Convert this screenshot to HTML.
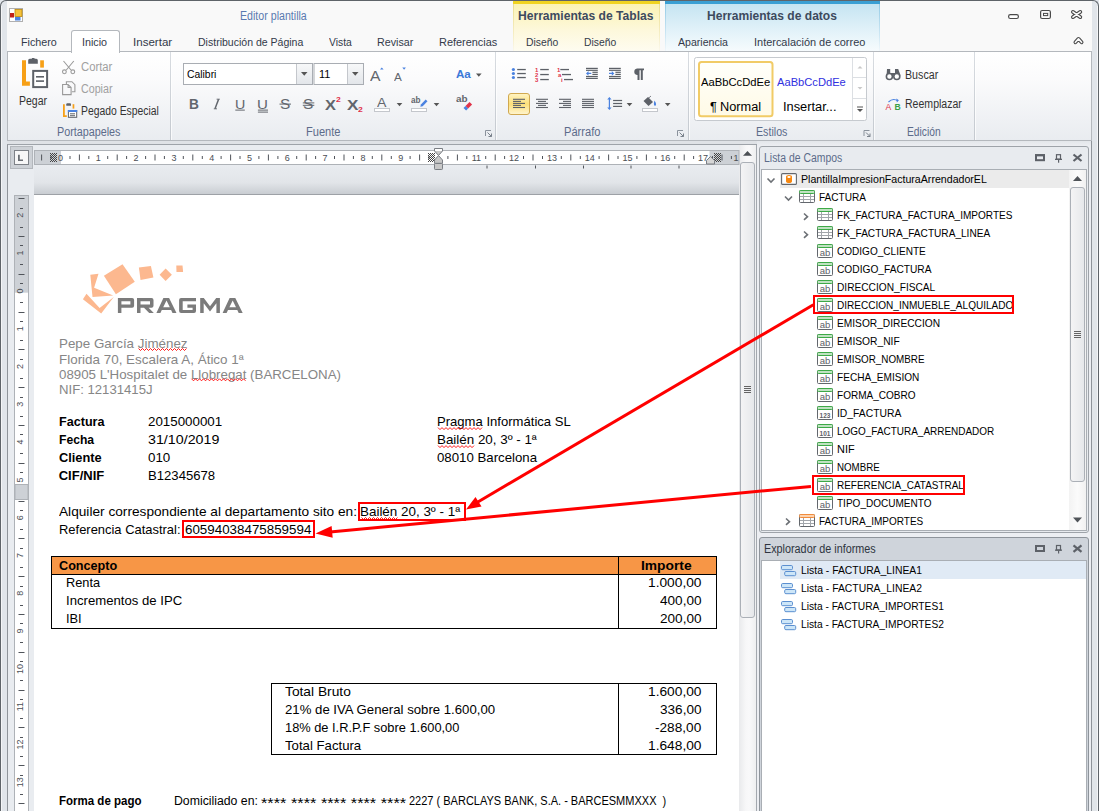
<!DOCTYPE html>
<html><head><meta charset="utf-8"><style>
html,body{margin:0;padding:0;}
body{width:1099px;height:811px;overflow:hidden;position:relative;background:#e3e7ec;font-family:"Liberation Sans",sans-serif;}
.a{position:absolute;box-sizing:border-box;}
.t{position:absolute;white-space:pre;line-height:normal;transform-origin:0 0;font-family:"Liberation Sans",sans-serif;}

</style></head><body>
<!-- frame -->
<div class=a style="left:0;top:0;width:1099px;height:811px;border:1px solid #5f6469;border-bottom:none;border-radius:6px 6px 0 0;background:#e1e5ea"></div>
<!-- title+tabs area -->
<div class=a style="left:7px;top:1px;width:1085px;height:50px;background:#f9f9f9"></div>
<!-- contextual yellow -->
<div class=a style="left:513px;top:1px;width:147px;height:50px;background:linear-gradient(#fbf2b0,#fdf8dc 60%,#fefcf0)"></div>
<div class=a style="left:513px;top:1px;width:1px;height:50px;background:linear-gradient(#eadc8a,#f6efc8 70%,#fbf8ec)"></div>
<div class=a style="left:659px;top:1px;width:1px;height:50px;background:linear-gradient(#eadc8a,#f6efc8 70%,#fbf8ec)"></div>
<div class=a style="left:513px;top:1px;width:147px;height:3px;background:#f0d320"></div>
<!-- contextual blue -->
<div class=a style="left:665px;top:1px;width:215px;height:50px;background:linear-gradient(#c2e3f1,#e2f2f9 60%,#f6fbfd)"></div>
<div class=a style="left:665px;top:1px;width:1px;height:50px;background:linear-gradient(#8fc8e4,#cfe8f4 70%,#f0f7fb)"></div>
<div class=a style="left:879px;top:1px;width:1px;height:50px;background:linear-gradient(#8fc8e4,#cfe8f4 70%,#f0f7fb)"></div>
<div class=a style="left:665px;top:1px;width:215px;height:3px;background:#3a9fd3"></div>
<!-- ribbon body -->
<div class=a style="left:7px;top:51px;width:1085px;height:90px;border:1px solid #b4b8bd;background:linear-gradient(#ffffff,#fbfbfc 30%,#e9ecf0)"></div>
<!-- active tab -->
<div class=a style="left:71px;top:30px;width:49px;height:23px;border:1px solid #b4b8bd;border-bottom:none;border-radius:3px 3px 0 0;background:#fff"></div>
<!-- group separators -->
<div class=a style="left:170px;top:52px;width:1px;height:88px;background:linear-gradient(#d8dce1,#c4c9cf)"></div><div class=a style="left:171px;top:52px;width:1px;height:88px;background:rgba(255,255,255,0.7)"></div>
<div class=a style="left:495px;top:52px;width:1px;height:88px;background:linear-gradient(#d8dce1,#c4c9cf)"></div><div class=a style="left:496px;top:52px;width:1px;height:88px;background:rgba(255,255,255,0.7)"></div>
<div class=a style="left:688px;top:52px;width:1px;height:88px;background:linear-gradient(#d8dce1,#c4c9cf)"></div><div class=a style="left:689px;top:52px;width:1px;height:88px;background:rgba(255,255,255,0.7)"></div>
<div class=a style="left:873px;top:52px;width:1px;height:88px;background:linear-gradient(#d8dce1,#c4c9cf)"></div><div class=a style="left:874px;top:52px;width:1px;height:88px;background:rgba(255,255,255,0.7)"></div>
<div class=a style="left:974px;top:52px;width:1px;height:88px;background:linear-gradient(#d8dce1,#c4c9cf)"></div><div class=a style="left:975px;top:52px;width:1px;height:88px;background:rgba(255,255,255,0.7)"></div>
<!-- below ribbon -->
<div class=a style="left:7px;top:141px;width:1085px;height:3px;background:#dfe2e6"></div>
<div class=a style="left:7px;top:144px;width:750px;height:667px;border-top:1px solid #9ea3a9;border-left:1px solid #8f949a;background:#e9ecf0"></div>
<div class=a style="left:1px;top:6px;width:1px;height:805px;background:#f4f5f7"></div>
<!-- band below ruler -->
<div class=a style="left:34px;top:165px;width:705px;height:30px;background:linear-gradient(#e9ecf0,#e2e5e9 60%,#c9cdd2);border-bottom:1px solid #9da1a6"></div>
<!-- page -->
<div class=a style="left:34px;top:195px;width:705px;height:616px;background:#fff"></div>
<!-- doc scrollbar -->
<div class=a style="left:739px;top:145px;width:18px;height:666px;background:linear-gradient(90deg,#e9eaec,#f7f7f8 40%,#f9f9fa 60%,#eeeff0);border-right:1px solid #a3a8ae"></div>
<div class=a style="left:740px;top:162px;width:15px;height:456px;background:linear-gradient(90deg,#f4f4f5,#e6e8eb);border:1px solid #abb0b7;border-radius:3px"></div>
<!-- right panels bg -->
<div class=a style="left:757px;top:141px;width:335px;height:670px;background:linear-gradient(#e3e6ea,#eceef2 5px)"></div>
<div class=a style="left:1091px;top:141px;width:1px;height:670px;background:#8e9399"></div>
<div class=a style="left:1092px;top:141px;width:5px;height:670px;background:#e1e5e9"></div>
<div class=a style="left:1097px;top:6px;width:1px;height:805px;background:#f4f5f7"></div>
<!-- panel 1 -->
<div class=a style="left:759px;top:146px;width:330px;height:387px;border:1px solid #9ea3a9;border-radius:3px;background:#e8ebef"></div>
<div class=a style="left:761px;top:169px;width:326px;height:362px;border:1px solid #a9aeb4;background:#fff"></div>
<div class=a style="left:780px;top:170px;width:290px;height:18px;background:#ebebeb"></div>
<!-- tree scrollbar -->
<div class=a style="left:1069px;top:170px;width:17px;height:360px;background:linear-gradient(90deg,#f3f3f3,#fbfbfb 50%,#f1f1f1)"></div>
<div class=a style="left:1070px;top:187px;width:15px;height:295px;background:linear-gradient(90deg,#f4f4f5,#e6e8eb);border:1px solid #abb0b7;border-radius:3px"></div>
<!-- panel 2 -->
<div class=a style="left:759px;top:537px;width:330px;height:290px;border:1px solid #8e949b;border-radius:3px;background:#cfd4db"></div>
<div class=a style="left:761px;top:560px;width:326px;height:260px;border:1px solid #a9aeb4;background:#fff"></div>
<div class=a style="left:780px;top:561px;width:306px;height:18px;background:#e0eaf5"></div>
<!-- logo -->
<svg class=a style="left:0;top:0" width="260" height="330" viewBox="0 0 260 330">
<g fill="#fcb88f">
<polygon points="103.9,275.7 122.5,264.3 134.8,281.7 115.9,294.3"/>
<polygon points="138.9,267.6 150.9,265.9 153.4,277.4 140.5,279.9"/>
<polygon points="159.6,274.7 165.6,268.6 171.9,274.7 165.6,281"/>
<polygon points="176.3,265.4 182.5,265.4 183.1,271.9 176.5,271.9"/>
<polygon points="90.3,274.7 98.5,273.8 94.1,287.8 113.2,295.4 92.5,297"/>
<polygon points="82.9,299.2 86.5,293.8 99.6,307.9 113.8,297 101.2,313.4"/>
</g>
</svg>
<svg class=a style="left:0;top:0" width="260" height="330" viewBox="0 0 260 330">
<g fill="#7b7b7b" fill-rule="evenodd">
<path d="M117.9,313.1 V298.1 H132.1 Q134.1,298.1 134.1,300.1 V305.7 Q134.1,307.7 132.1,307.7 H121.4 V313.1 Z M121.4,301.3 H130.4 V304.5 H121.4 Z"/>
<path d="M137,313.1 V298.1 H151.5 Q153.5,298.1 153.5,300.1 V305.7 Q153.5,307.7 151.5,307.7 H148.6 L153.8,313.1 H149.2 L144,307.7 H140.5 V313.1 Z M140.5,301.3 H150 V304.5 H140.5 Z"/>
<path d="M156.4,313.1 L163.4,298.1 H169.1 L176.5,313.1 H172.5 L171.1,310 H161.8 L160.4,313.1 Z M163.2,307.2 H169.8 L166.5,300.6 Z"/>
<path d="M196,298.1 H181.1 Q179.1,298.1 179.1,300.1 V311.1 Q179.1,313.1 181.1,313.1 H194 Q196,313.1 196,311.1 V304.5 H187.4 V307.7 H192.6 V310 H182.7 V301.3 H196 Z"/>
<path d="M200.2,313.1 V298.1 H203.8 L210,306.3 L216.2,298.1 H219.9 V313.1 H216.4 V303.2 L210,311.6 L203.7,303.2 V313.1 Z"/>
<path d="M222.60000000000002,313.1 L229.60000000000002,298.1 H235.3 L242.7,313.1 H238.7 L237.3,310 H228.0 L226.60000000000002,313.1 Z M229.39999999999998,307.2 H236.0 L232.7,300.6 Z"/>
</g></svg>
<!-- table 1 -->
<div class=a style="left:51px;top:556px;width:666px;height:73px;border:1px solid #000"></div>
<div class=a style="left:52px;top:557px;width:664px;height:18px;background:#f79646;border-bottom:1px solid #000"></div>
<div class=a style="left:618px;top:556px;width:1px;height:73px;background:#000"></div>
<!-- table 2 -->
<div class=a style="left:271px;top:683px;width:446px;height:72px;border:1px solid #000"></div>
<div class=a style="left:618px;top:683px;width:1px;height:72px;background:#000"></div>

<svg class=a style='left:0;top:0' width='1099' height='811'><defs>
<linearGradient id='gcombo' x1='0' y1='0' x2='0' y2='1'><stop offset='0' stop-color='#f7f8f9'/><stop offset='1' stop-color='#e3e6ea'/></linearGradient>
<linearGradient id='gsel' x1='0' y1='0' x2='0' y2='1'><stop offset='0' stop-color='#fff4c4'/><stop offset='0.5' stop-color='#fde07a'/><stop offset='1' stop-color='#fff5d0'/></linearGradient>
<linearGradient id='gsty' x1='0' y1='0' x2='0' y2='1'><stop offset='0' stop-color='#fffffb'/><stop offset='1' stop-color='#fffae6'/></linearGradient>
</defs>
<rect x="9.5" y="8.5" width="13" height="13" fill="#fff" stroke="#b0b0b0"/>
<rect x="15" y="9.5" width="7" height="7" fill="#f5c23a" stroke="#b8860b" stroke-width="0.8"/>
<rect x="10" y="13" width="4" height="4.5" fill="#c0201a"/>
<rect x="15" y="17" width="5.5" height="3.5" fill="#4a82e0"/>
<rect x="1008.6" y="14.6" width="9.8" height="3.9" rx="1.8" fill="#fff" stroke="#4a4a4a" stroke-width="1.2"/>
<rect x="1040.6" y="10.5" width="9.8" height="8" rx="1.5" fill="none" stroke="#4a4a4a" stroke-width="1.2"/>
<rect x="1043.5" y="13.4" width="4.2" height="2.2" fill="none" stroke="#4a4a4a" stroke-width="1"/>
<path d="M1072.9,11.9 L1080.3,17.1 M1080.3,11.9 L1072.9,17.1" stroke="#4a4a4a" stroke-width="3.8" stroke-linecap="round"/>
<path d="M1072.9,11.9 L1080.3,17.1 M1080.3,11.9 L1072.9,17.1" stroke="#fbfbfb" stroke-width="1.6" stroke-linecap="round"/>
<path d="M1075.4,42.3 L1078.5,38.9 L1081.6,42.3" fill="none" stroke="#4a4a4a" stroke-width="3.8" stroke-linecap="round" stroke-linejoin="round"/>
<path d="M1075.4,42.3 L1078.5,38.9 L1081.6,42.3" fill="none" stroke="#fbfbfb" stroke-width="1.6" stroke-linecap="round" stroke-linejoin="round"/>
<path d="M22,60.3 h4 v21.3 h3.9 v4.2 h-7.9 Z" fill="#f7a017"/>
<rect x="40.2" y="60.3" width="3.7" height="7.3" fill="#f7a017"/>
<path d="M28.2,63.8 v-3.5 q0,-1.5 1.5,-1.5 h2.2 v-0.8 h2.6 v0.8 h1.8 q1.5,0 1.5,1.5 v3.5 Z" fill="#5d6168"/>
<rect x="33.2" y="70.9" width="13.9" height="16.2" fill="#fff" stroke="#5d6168" stroke-width="2"/>
<rect x="36" y="76" width="8" height="1.6" fill="#5d6168"/><rect x="36" y="80.3" width="8" height="1.6" fill="#5d6168"/>
<path d="M63.5,61 L71,70 M73.8,61 L66.3,70" stroke="#9a9a9a" stroke-width="1.1" fill="none"/>
<circle cx="64.4" cy="71.8" r="1.9" fill="none" stroke="#9a9a9a" stroke-width="1.1"/><circle cx="72.8" cy="71.8" r="1.9" fill="none" stroke="#9a9a9a" stroke-width="1.1"/>
<path d="M66.4,84 v-2.3 h5.5 l3,3 v7.1 h-3" fill="none" stroke="#9a9a9a" stroke-width="1.1"/>
<path d="M62.6,84.5 h5.5 l3,3 v7.1 h-8.5 Z M68.1,84.5 v3 h3" fill="none" stroke="#9a9a9a" stroke-width="1.1"/>
<path d="M63,104.2 h1.8 v11 h2 v1.7 h-3.8 Z" fill="#f7a017"/><rect x="72.6" y="104.2" width="1.7" height="4.4" fill="#f7a017"/>
<path d="M66.3,105.8 v-1.6 q0,-1 1,-1 h2.7 q1,0 1,1 v1.6 Z" fill="#5d6168"/>
<rect x="68.4" y="110.5" width="8.3" height="6.8" fill="#fff" stroke="#5d6168" stroke-width="1"/>
<rect x="67.9" y="110" width="9.3" height="2" fill="#4a82e0"/>
<rect x="70" y="113.3" width="5" height="1" fill="#5d6168"/><rect x="70" y="115.2" width="5" height="1" fill="#5d6168"/>
<rect x="183.5" y="63.5" width="129" height="21" fill="#fff" stroke="#a9adb3"/>
<rect x="296.5" y="64" width="15.5" height="20" fill="url(#gcombo)" stroke="none"/>
<line x1="296.5" y1="64" x2="296.5" y2="84" stroke="#c4c7cc"/>
<path d="M301,72 h6.5 l-3.25,3.8 Z" fill="#555"/>
<rect x="314" y="63.5" width="49.5" height="21" fill="#fff" stroke="#a9adb3"/>
<rect x="347.5" y="64" width="15.5" height="20" fill="url(#gcombo)"/>
<line x1="347.5" y1="64" x2="347.5" y2="84" stroke="#c4c7cc"/>
<path d="M352,72 h6.5 l-3.25,3.8 Z" fill="#555"/>
<path d="M485.5,136 v-5.5 h5.5" fill="none" stroke="#8a929c" stroke-width="1"/><path d="M487.5,132.5 l4,4 M488.5,136.5 h3 v-3" fill="none" stroke="#7a828c" stroke-width="1"/>
<path d="M677.5,136 v-5.5 h5.5" fill="none" stroke="#8a929c" stroke-width="1"/><path d="M679.5,132.5 l4,4 M680.5,136.5 h3 v-3" fill="none" stroke="#7a828c" stroke-width="1"/>
<path d="M864.0,136 v-5.5 h5.5" fill="none" stroke="#8a929c" stroke-width="1"/><path d="M866.0,132.5 l4,4 M867.0,136.5 h3 v-3" fill="none" stroke="#7a828c" stroke-width="1"/>
<path d="M476.0,73.5 h5.6 l-2.8,3.2 Z" fill="#555"/>
<path d="M396.7,103 h5.6 l-2.8,3.2 Z" fill="#555"/>
<path d="M433.7,103 h5.6 l-2.8,3.2 Z" fill="#555"/>
<path d="M626.7,103 h5.6 l-2.8,3.2 Z" fill="#555"/>
<path d="M664.9000000000001,103 h5.6 l-2.8,3.2 Z" fill="#555"/>
<rect x="374.5" y="108.5" width="15" height="3" fill="#fff" stroke="#c4c7cc" stroke-width="1"/>
<rect x="411.5" y="108.5" width="15" height="3" fill="#fff" stroke="#c4c7cc" stroke-width="1"/>
<rect x="642.5" y="108.5" width="15" height="3" fill="#fff" stroke="#c4c7cc" stroke-width="1"/>
<path d="M420.3,106.8 l0.6,-2.4 l4.8,-5 l1.8,1.8 l-4.8,5 Z" fill="#4a82e0"/>
<path d="M465.5,106 l4,-4 l2.6,2.6 l-4,4 Z" fill="#e0334a"/><path d="M463.5,108 l2,-2 l2.6,2.6 l-2,2 Z" fill="#4a82e0"/>
<path d="M380,69.6 l1.8,-2.2 l1.8,2.2 Z" fill="#4a82e0"/>
<path d="M402.3,67.6 h3.6 l-1.8,2.2 Z" fill="#4a82e0"/>
<circle cx="513.4" cy="69.5" r="1.6" fill="#4a82e0"/><rect x="517.2" y="68.9" width="8.6" height="1.3" fill="#5d6168"/>
<circle cx="513.4" cy="73.5" r="1.6" fill="#4a82e0"/><rect x="517.2" y="72.9" width="8.6" height="1.3" fill="#5d6168"/>
<circle cx="513.4" cy="77.5" r="1.6" fill="#4a82e0"/><rect x="517.2" y="76.9" width="8.6" height="1.3" fill="#5d6168"/>
<rect x="540.2" y="68.9" width="8.6" height="1.3" fill="#5d6168"/>
<text x="535" y="72.0" font-family="Liberation Sans" font-size="6" font-weight="700" fill="#e0334a">1</text>
<rect x="540.2" y="73.9" width="8.6" height="1.3" fill="#5d6168"/>
<text x="535" y="77.0" font-family="Liberation Sans" font-size="6" font-weight="700" fill="#e0334a">2</text>
<rect x="540.2" y="78.9" width="8.6" height="1.3" fill="#5d6168"/>
<text x="535" y="82.0" font-family="Liberation Sans" font-size="6" font-weight="700" fill="#e0334a">3</text>
<text x="557" y="72" font-family="Liberation Sans" font-size="6" font-weight="700" fill="#e0334a">1</text><rect x="560.3" y="68.9" width="8.7" height="1.3" fill="#5d6168"/>
<text x="558" y="77" font-family="Liberation Sans" font-size="6" font-weight="700" fill="#e0334a">a</text><rect x="562" y="73.9" width="9" height="1.3" fill="#5d6168"/>
<text x="561" y="82" font-family="Liberation Sans" font-size="6" font-weight="700" fill="#e0334a">i</text><rect x="564" y="78.9" width="9" height="1.3" fill="#5d6168"/>
<rect x="586" y="67.80000000000001" width="11.8" height="1.2" fill="#5d6168"/>
<rect x="586" y="69.7" width="11.8" height="1.2" fill="#5d6168"/>
<rect x="586" y="75.9" width="11.8" height="1.2" fill="#5d6168"/>
<rect x="586" y="77.80000000000001" width="11.8" height="1.2" fill="#5d6168"/>
<rect x="592.4" y="71.7" width="5.4" height="1.2" fill="#5d6168"/>
<rect x="592.4" y="73.80000000000001" width="5.4" height="1.2" fill="#5d6168"/>
<path d="M586,73.4 l2.5,-2.3 v1.6 h2.8 v1.4 h-2.8 v1.6 Z" fill="#4a82e0"/>
<rect x="609" y="67.80000000000001" width="11.8" height="1.2" fill="#5d6168"/>
<rect x="609" y="69.7" width="11.8" height="1.2" fill="#5d6168"/>
<rect x="609" y="75.9" width="11.8" height="1.2" fill="#5d6168"/>
<rect x="609" y="77.80000000000001" width="11.8" height="1.2" fill="#5d6168"/>
<rect x="615.4" y="71.7" width="5.4" height="1.2" fill="#5d6168"/>
<rect x="615.4" y="73.80000000000001" width="5.4" height="1.2" fill="#5d6168"/>
<path d="M614.3,73.4 l-2.5,-2.3 v1.6 h-2.8 v1.4 h2.8 v1.6 Z" fill="#4a82e0"/>
<path d="M637,68.5 h7 v1.8 h-1.2 v9.7 h-2 v-9.7 h-1.3 v9.7 h-2 v-5 h-0.5 a3.3,3.3 0 0 1 0,-6.5 Z" fill="#5d6168"/>
<rect x="508.5" y="93.5" width="21" height="21" rx="2.5" fill="url(#gsel)" stroke="#d0a850"/>
<rect x="513" y="98.75" width="12" height="1.1" fill="#5d6168"/>
<rect x="513" y="100.85000000000001" width="8" height="1.1" fill="#5d6168"/>
<rect x="513" y="102.85000000000001" width="12" height="1.1" fill="#5d6168"/>
<rect x="513" y="104.85000000000001" width="8" height="1.1" fill="#5d6168"/>
<rect x="513" y="106.95" width="12" height="1.1" fill="#5d6168"/>
<rect x="536.0" y="98.75" width="12" height="1.1" fill="#5d6168"/>
<rect x="538.0" y="100.85000000000001" width="8" height="1.1" fill="#5d6168"/>
<rect x="536.0" y="102.85000000000001" width="12" height="1.1" fill="#5d6168"/>
<rect x="538.0" y="104.85000000000001" width="8" height="1.1" fill="#5d6168"/>
<rect x="536.0" y="106.95" width="12" height="1.1" fill="#5d6168"/>
<rect x="559" y="98.75" width="12" height="1.1" fill="#5d6168"/>
<rect x="563" y="100.85000000000001" width="8" height="1.1" fill="#5d6168"/>
<rect x="559" y="102.85000000000001" width="12" height="1.1" fill="#5d6168"/>
<rect x="563" y="104.85000000000001" width="8" height="1.1" fill="#5d6168"/>
<rect x="559" y="106.95" width="12" height="1.1" fill="#5d6168"/>
<rect x="582" y="98.75" width="12" height="1.1" fill="#5d6168"/>
<rect x="582" y="100.85000000000001" width="12" height="1.1" fill="#5d6168"/>
<rect x="582" y="102.85000000000001" width="12" height="1.1" fill="#5d6168"/>
<rect x="582" y="104.85000000000001" width="12" height="1.1" fill="#5d6168"/>
<rect x="582" y="106.95" width="12" height="1.1" fill="#5d6168"/>
<path d="M609.4,97 l-2.2,2.4 h1.6 v8.2 h-1.6 l2.2,2.4 l2.2,-2.4 h-1.6 v-8.2 h1.6 Z" fill="#4a82e0"/>
<rect x="613.1" y="99.9" width="9" height="1.2" fill="#5d6168"/>
<rect x="613.1" y="102.9" width="9" height="1.2" fill="#5d6168"/>
<rect x="613.1" y="105.80000000000001" width="9" height="1.2" fill="#5d6168"/>
<path d="M643.5,101 l4.5,-4 l5,5 l-4.5,4 Z" fill="#5d6168"/><path d="M647,99.5 l4,-3.5" stroke="#5d6168" stroke-width="0.8"/>
<path d="M654.5,100.5 q2,2.5 1.5,5 h-2 q-0.5,-2.5 0.5,-5 Z" fill="#4a82e0"/>
<rect x="694.5" y="57.5" width="172" height="63" rx="2" fill="#fff" stroke="#c6cacf"/>
<rect x="699" y="62" width="73.5" height="54.3" rx="2.5" fill="url(#gsty)" stroke="#f1cb66" stroke-width="2"/>
<line x1="852.5" y1="58" x2="852.5" y2="120" stroke="#dcdfe3"/><line x1="853" y1="77.5" x2="866" y2="77.5" stroke="#dcdfe3"/><line x1="853" y1="98.5" x2="866" y2="98.5" stroke="#dcdfe3"/>
<path d="M857.5,68.5 h5 l-2.5,-2.5 Z" fill="#c8c8c8"/><path d="M857.5,87 h5 l-2.5,2.5 Z" fill="#c8c8c8"/>
<rect x="857" y="106.5" width="6" height="1" fill="#555"/><path d="M857,109 h6 l-3,3 Z" fill="#555"/>
<path d="M887,69 h3.2 v4 h4.8 v-4 h3.2 l2.4,6.5 h-14 Z" fill="#5d6168"/>
<circle cx="889.4" cy="76.5" r="3" fill="#fff" stroke="#5d6168" stroke-width="1.6"/><circle cx="896.8" cy="76.5" r="3" fill="#fff" stroke="#5d6168" stroke-width="1.6"/>
<text x="885.6" y="109.8" font-family="Liberation Sans" font-size="8.6" fill="#e0334a">A</text><text x="894.6" y="109.8" font-family="Liberation Sans" font-size="8.6" font-weight="700" fill="#3aa047">B</text>
<path d="M888.5,102 q4.5,-4.5 9.5,-1" fill="none" stroke="#4a82e0" stroke-width="1.1"/><path d="M896.3,98.5 l2.6,1.8 l-2.1,2.3 Z" fill="#4a82e0"/>

<rect x="235.3" y="109.6" width="9.5" height="1" fill="#62666d"/>
<rect x="257.9" y="109.6" width="10.1" height="1" fill="#62666d"/><rect x="257.9" y="111.6" width="10.1" height="1" fill="#62666d"/>
<rect x="279.5" y="103.6" width="11.5" height="1" fill="#62666d"/>
<rect x="302.8" y="102.4" width="11.5" height="1" fill="#62666d"/><rect x="302.8" y="104.8" width="11.5" height="1" fill="#62666d"/>
<path d="M218.6,99.2 L215,108.8" stroke="#62666d" stroke-width="1.5"/><path d="M216.6,99.2 h3.2 M213.8,108.8 h3.2" stroke="#62666d" stroke-width="0.9"/>
<rect x="10.5" y="146.5" width="22" height="22" fill="#cdd1d6" stroke="#b3b7bc"/>
<rect x="14.5" y="150.5" width="14" height="14" fill="#f7f7f7" stroke="#7d8187"/>
<path d="M18,154.8 h1.8 v4.6 h3.2 v1.6 h-5 Z" fill="#6a6e74"/>
<rect x="34.5" y="150.5" width="704.5" height="14" fill="#cdd1d6" stroke="#aeb2b7" stroke-width="1"/>
<rect x="61" y="151" width="648.5" height="13" fill="#fff"/>
<rect x="41.1" y="154.5" width="1" height="6" fill="#50545a"/>
<rect x="50.5" y="156" width="1" height="3" fill="#50545a"/>
<rect x="69.5" y="156" width="1" height="3" fill="#50545a"/>
<rect x="78.9" y="154.5" width="1" height="6" fill="#50545a"/>
<rect x="88.3" y="156" width="1" height="3" fill="#50545a"/>
<rect x="107.2" y="156" width="1" height="3" fill="#50545a"/>
<rect x="116.7" y="154.5" width="1" height="6" fill="#50545a"/>
<rect x="126.1" y="156" width="1" height="3" fill="#50545a"/>
<rect x="145.1" y="156" width="1" height="3" fill="#50545a"/>
<rect x="154.5" y="154.5" width="1" height="6" fill="#50545a"/>
<rect x="163.9" y="156" width="1" height="3" fill="#50545a"/>
<rect x="182.8" y="156" width="1" height="3" fill="#50545a"/>
<rect x="192.3" y="154.5" width="1" height="6" fill="#50545a"/>
<rect x="201.8" y="156" width="1" height="3" fill="#50545a"/>
<rect x="220.6" y="156" width="1" height="3" fill="#50545a"/>
<rect x="230.1" y="154.5" width="1" height="6" fill="#50545a"/>
<rect x="239.5" y="156" width="1" height="3" fill="#50545a"/>
<rect x="258.4" y="156" width="1" height="3" fill="#50545a"/>
<rect x="267.9" y="154.5" width="1" height="6" fill="#50545a"/>
<rect x="277.4" y="156" width="1" height="3" fill="#50545a"/>
<rect x="296.2" y="156" width="1" height="3" fill="#50545a"/>
<rect x="305.7" y="154.5" width="1" height="6" fill="#50545a"/>
<rect x="315.1" y="156" width="1" height="3" fill="#50545a"/>
<rect x="334.0" y="156" width="1" height="3" fill="#50545a"/>
<rect x="343.5" y="154.5" width="1" height="6" fill="#50545a"/>
<rect x="352.9" y="156" width="1" height="3" fill="#50545a"/>
<rect x="371.8" y="156" width="1" height="3" fill="#50545a"/>
<rect x="381.3" y="154.5" width="1" height="6" fill="#50545a"/>
<rect x="390.8" y="156" width="1" height="3" fill="#50545a"/>
<rect x="409.6" y="156" width="1" height="3" fill="#50545a"/>
<rect x="419.1" y="154.5" width="1" height="6" fill="#50545a"/>
<rect x="428.5" y="156" width="1" height="3" fill="#50545a"/>
<rect x="447.4" y="156" width="1" height="3" fill="#50545a"/>
<rect x="456.9" y="154.5" width="1" height="6" fill="#50545a"/>
<rect x="466.3" y="156" width="1" height="3" fill="#50545a"/>
<rect x="485.2" y="156" width="1" height="3" fill="#50545a"/>
<rect x="494.7" y="154.5" width="1" height="6" fill="#50545a"/>
<rect x="504.1" y="156" width="1" height="3" fill="#50545a"/>
<rect x="523.0" y="156" width="1" height="3" fill="#50545a"/>
<rect x="532.5" y="154.5" width="1" height="6" fill="#50545a"/>
<rect x="542.0" y="156" width="1" height="3" fill="#50545a"/>
<rect x="560.8" y="156" width="1" height="3" fill="#50545a"/>
<rect x="570.3" y="154.5" width="1" height="6" fill="#50545a"/>
<rect x="579.8" y="156" width="1" height="3" fill="#50545a"/>
<rect x="598.6" y="156" width="1" height="3" fill="#50545a"/>
<rect x="608.1" y="154.5" width="1" height="6" fill="#50545a"/>
<rect x="617.5" y="156" width="1" height="3" fill="#50545a"/>
<rect x="636.4" y="156" width="1" height="3" fill="#50545a"/>
<rect x="645.9" y="154.5" width="1" height="6" fill="#50545a"/>
<rect x="655.3" y="156" width="1" height="3" fill="#50545a"/>
<rect x="674.2" y="156" width="1" height="3" fill="#50545a"/>
<rect x="683.7" y="154.5" width="1" height="6" fill="#50545a"/>
<rect x="693.1" y="156" width="1" height="3" fill="#50545a"/>
<rect x="712.0" y="156" width="1" height="3" fill="#50545a"/>
<rect x="721.5" y="154.5" width="1" height="6" fill="#50545a"/>
<rect x="730.9" y="156" width="1" height="3" fill="#50545a"/>
<text x="98.3" y="161" font-family="Liberation Sans" font-size="9" fill="#4a4e54" text-anchor="middle">1</text>
<text x="136.1" y="161" font-family="Liberation Sans" font-size="9" fill="#4a4e54" text-anchor="middle">2</text>
<text x="173.9" y="161" font-family="Liberation Sans" font-size="9" fill="#4a4e54" text-anchor="middle">3</text>
<text x="211.7" y="161" font-family="Liberation Sans" font-size="9" fill="#4a4e54" text-anchor="middle">4</text>
<text x="249.5" y="161" font-family="Liberation Sans" font-size="9" fill="#4a4e54" text-anchor="middle">5</text>
<text x="287.3" y="161" font-family="Liberation Sans" font-size="9" fill="#4a4e54" text-anchor="middle">6</text>
<text x="325.1" y="161" font-family="Liberation Sans" font-size="9" fill="#4a4e54" text-anchor="middle">7</text>
<text x="362.9" y="161" font-family="Liberation Sans" font-size="9" fill="#4a4e54" text-anchor="middle">8</text>
<text x="400.7" y="161" font-family="Liberation Sans" font-size="9" fill="#4a4e54" text-anchor="middle">9</text>
<text x="476.3" y="161" font-family="Liberation Sans" font-size="9" fill="#4a4e54" text-anchor="middle">11</text>
<text x="514.1" y="161" font-family="Liberation Sans" font-size="9" fill="#4a4e54" text-anchor="middle">12</text>
<text x="551.9" y="161" font-family="Liberation Sans" font-size="9" fill="#4a4e54" text-anchor="middle">13</text>
<text x="589.7" y="161" font-family="Liberation Sans" font-size="9" fill="#4a4e54" text-anchor="middle">14</text>
<text x="627.5" y="161" font-family="Liberation Sans" font-size="9" fill="#4a4e54" text-anchor="middle">15</text>
<text x="665.3" y="161" font-family="Liberation Sans" font-size="9" fill="#4a4e54" text-anchor="middle">16</text>
<text x="703.1" y="161" font-family="Liberation Sans" font-size="9" fill="#4a4e54" text-anchor="middle">17</text>
<text x="60.5" y="161" font-family="Liberation Sans" font-size="9" fill="#4a4e54" text-anchor="middle">0</text>
<rect x="50" y="153" width="1" height="1" fill="#444"/><rect x="50" y="155" width="1" height="1" fill="#444"/><rect x="50" y="157" width="1" height="1" fill="#444"/><rect x="50" y="159" width="1" height="1" fill="#444"/><rect x="50" y="161" width="1" height="1" fill="#444"/><rect x="51" y="154" width="1" height="1" fill="#444"/><rect x="51" y="156" width="1" height="1" fill="#444"/><rect x="51" y="158" width="1" height="1" fill="#444"/><rect x="51" y="160" width="1" height="1" fill="#444"/><rect x="52" y="153" width="1" height="1" fill="#444"/><rect x="52" y="155" width="1" height="1" fill="#444"/><rect x="52" y="157" width="1" height="1" fill="#444"/><rect x="52" y="159" width="1" height="1" fill="#444"/><rect x="52" y="161" width="1" height="1" fill="#444"/><rect x="53" y="154" width="1" height="1" fill="#444"/><rect x="53" y="156" width="1" height="1" fill="#444"/><rect x="53" y="158" width="1" height="1" fill="#444"/><rect x="53" y="160" width="1" height="1" fill="#444"/><rect x="54" y="153" width="1" height="1" fill="#444"/><rect x="54" y="155" width="1" height="1" fill="#444"/><rect x="54" y="157" width="1" height="1" fill="#444"/><rect x="54" y="159" width="1" height="1" fill="#444"/><rect x="54" y="161" width="1" height="1" fill="#444"/><rect x="55" y="154" width="1" height="1" fill="#444"/><rect x="55" y="156" width="1" height="1" fill="#444"/><rect x="55" y="158" width="1" height="1" fill="#444"/><rect x="55" y="160" width="1" height="1" fill="#444"/><rect x="56" y="153" width="1" height="1" fill="#444"/><rect x="56" y="155" width="1" height="1" fill="#444"/><rect x="56" y="157" width="1" height="1" fill="#444"/><rect x="56" y="159" width="1" height="1" fill="#444"/><rect x="56" y="161" width="1" height="1" fill="#444"/>
<rect x="714" y="153" width="1" height="1" fill="#444"/><rect x="714" y="155" width="1" height="1" fill="#444"/><rect x="714" y="157" width="1" height="1" fill="#444"/><rect x="714" y="159" width="1" height="1" fill="#444"/><rect x="714" y="161" width="1" height="1" fill="#444"/><rect x="715" y="154" width="1" height="1" fill="#444"/><rect x="715" y="156" width="1" height="1" fill="#444"/><rect x="715" y="158" width="1" height="1" fill="#444"/><rect x="715" y="160" width="1" height="1" fill="#444"/><rect x="716" y="153" width="1" height="1" fill="#444"/><rect x="716" y="155" width="1" height="1" fill="#444"/><rect x="716" y="157" width="1" height="1" fill="#444"/><rect x="716" y="159" width="1" height="1" fill="#444"/><rect x="716" y="161" width="1" height="1" fill="#444"/><rect x="717" y="154" width="1" height="1" fill="#444"/><rect x="717" y="156" width="1" height="1" fill="#444"/><rect x="717" y="158" width="1" height="1" fill="#444"/><rect x="717" y="160" width="1" height="1" fill="#444"/><rect x="718" y="153" width="1" height="1" fill="#444"/><rect x="718" y="155" width="1" height="1" fill="#444"/><rect x="718" y="157" width="1" height="1" fill="#444"/><rect x="718" y="159" width="1" height="1" fill="#444"/><rect x="718" y="161" width="1" height="1" fill="#444"/><rect x="719" y="154" width="1" height="1" fill="#444"/><rect x="719" y="156" width="1" height="1" fill="#444"/><rect x="719" y="158" width="1" height="1" fill="#444"/><rect x="719" y="160" width="1" height="1" fill="#444"/><rect x="720" y="153" width="1" height="1" fill="#444"/><rect x="720" y="155" width="1" height="1" fill="#444"/><rect x="720" y="157" width="1" height="1" fill="#444"/><rect x="720" y="159" width="1" height="1" fill="#444"/><rect x="720" y="161" width="1" height="1" fill="#444"/>
<rect x="428" y="153" width="1" height="1" fill="#444"/><rect x="428" y="155" width="1" height="1" fill="#444"/><rect x="428" y="157" width="1" height="1" fill="#444"/><rect x="428" y="159" width="1" height="1" fill="#444"/><rect x="428" y="161" width="1" height="1" fill="#444"/><rect x="429" y="154" width="1" height="1" fill="#444"/><rect x="429" y="156" width="1" height="1" fill="#444"/><rect x="429" y="158" width="1" height="1" fill="#444"/><rect x="429" y="160" width="1" height="1" fill="#444"/><rect x="430" y="153" width="1" height="1" fill="#444"/><rect x="430" y="155" width="1" height="1" fill="#444"/><rect x="430" y="157" width="1" height="1" fill="#444"/><rect x="430" y="159" width="1" height="1" fill="#444"/><rect x="430" y="161" width="1" height="1" fill="#444"/><rect x="431" y="154" width="1" height="1" fill="#444"/><rect x="431" y="156" width="1" height="1" fill="#444"/><rect x="431" y="158" width="1" height="1" fill="#444"/><rect x="431" y="160" width="1" height="1" fill="#444"/><rect x="432" y="153" width="1" height="1" fill="#444"/><rect x="432" y="155" width="1" height="1" fill="#444"/><rect x="432" y="157" width="1" height="1" fill="#444"/><rect x="432" y="159" width="1" height="1" fill="#444"/><rect x="432" y="161" width="1" height="1" fill="#444"/><rect x="433" y="154" width="1" height="1" fill="#444"/><rect x="433" y="156" width="1" height="1" fill="#444"/><rect x="433" y="158" width="1" height="1" fill="#444"/><rect x="433" y="160" width="1" height="1" fill="#444"/><rect x="434" y="153" width="1" height="1" fill="#444"/><rect x="434" y="155" width="1" height="1" fill="#444"/><rect x="434" y="157" width="1" height="1" fill="#444"/><rect x="434" y="159" width="1" height="1" fill="#444"/><rect x="434" y="161" width="1" height="1" fill="#444"/>
<path d="M434.5,148.5 h8 v2.5 l-4,4.5 l4,4.5 v3.3 h-8 v-3.3 l4,-4.5 l-4,-4.5 Z" fill="#c8c8c8" stroke="#7a7e84"/>
<rect x="435" y="149" width="7" height="2" fill="#fff"/>
<rect x="434.5" y="163.5" width="8" height="6" rx="0.8" fill="#c8c8c8" stroke="#7a7e84"/>
<path d="M710.5,156.5 l4,4 v3.5 h-8 v-3.5 Z" fill="#d6d6d6" stroke="#7a7e84"/>
<text x="736" y="161" font-family="Liberation Sans" font-size="9" fill="#4a4e54" text-anchor="middle">1</text>
<rect x="486.5" y="165.5" width="1" height="3" fill="#50545a"/>
<rect x="535.0" y="165.5" width="1" height="3" fill="#50545a"/>
<rect x="583.0" y="165.5" width="1" height="3" fill="#50545a"/>
<rect x="630.5" y="165.5" width="1" height="3" fill="#50545a"/>
<rect x="678.5" y="165.5" width="1" height="3" fill="#50545a"/>
<rect x="14.5" y="195.5" width="14" height="620" fill="#fff" stroke="#aeb2b7"/>
<rect x="15" y="196" width="13" height="96.7" fill="#cdd1d6"/>
<rect x="15" y="484.5" width="13" height="15" fill="#cdd1d6" stroke="#aeb2b7"/>
<rect x="18.5" y="198" width="6" height="1" fill="#50545a"/>
<rect x="20" y="208" width="3" height="1" fill="#50545a"/>
<rect x="20" y="227" width="3" height="1" fill="#50545a"/>
<rect x="18.5" y="236" width="6" height="1" fill="#50545a"/>
<rect x="20" y="245" width="3" height="1" fill="#50545a"/>
<rect x="20" y="264" width="3" height="1" fill="#50545a"/>
<rect x="18.5" y="274" width="6" height="1" fill="#50545a"/>
<rect x="20" y="283" width="3" height="1" fill="#50545a"/>
<rect x="20" y="302" width="3" height="1" fill="#50545a"/>
<rect x="18.5" y="312" width="6" height="1" fill="#50545a"/>
<rect x="20" y="321" width="3" height="1" fill="#50545a"/>
<rect x="20" y="340" width="3" height="1" fill="#50545a"/>
<rect x="18.5" y="349" width="6" height="1" fill="#50545a"/>
<rect x="20" y="359" width="3" height="1" fill="#50545a"/>
<rect x="20" y="378" width="3" height="1" fill="#50545a"/>
<rect x="18.5" y="387" width="6" height="1" fill="#50545a"/>
<rect x="20" y="397" width="3" height="1" fill="#50545a"/>
<rect x="20" y="416" width="3" height="1" fill="#50545a"/>
<rect x="18.5" y="425" width="6" height="1" fill="#50545a"/>
<rect x="20" y="434" width="3" height="1" fill="#50545a"/>
<rect x="20" y="453" width="3" height="1" fill="#50545a"/>
<rect x="18.5" y="463" width="6" height="1" fill="#50545a"/>
<rect x="20" y="472" width="3" height="1" fill="#50545a"/>
<rect x="18.5" y="501" width="6" height="1" fill="#50545a"/>
<rect x="20" y="510" width="3" height="1" fill="#50545a"/>
<rect x="20" y="529" width="3" height="1" fill="#50545a"/>
<rect x="18.5" y="538" width="6" height="1" fill="#50545a"/>
<rect x="20" y="548" width="3" height="1" fill="#50545a"/>
<rect x="20" y="567" width="3" height="1" fill="#50545a"/>
<rect x="18.5" y="576" width="6" height="1" fill="#50545a"/>
<rect x="20" y="586" width="3" height="1" fill="#50545a"/>
<rect x="20" y="605" width="3" height="1" fill="#50545a"/>
<rect x="18.5" y="614" width="6" height="1" fill="#50545a"/>
<rect x="20" y="623" width="3" height="1" fill="#50545a"/>
<rect x="20" y="642" width="3" height="1" fill="#50545a"/>
<rect x="18.5" y="652" width="6" height="1" fill="#50545a"/>
<rect x="20" y="661" width="3" height="1" fill="#50545a"/>
<rect x="20" y="680" width="3" height="1" fill="#50545a"/>
<rect x="18.5" y="690" width="6" height="1" fill="#50545a"/>
<rect x="20" y="699" width="3" height="1" fill="#50545a"/>
<rect x="20" y="718" width="3" height="1" fill="#50545a"/>
<rect x="18.5" y="727" width="6" height="1" fill="#50545a"/>
<rect x="20" y="737" width="3" height="1" fill="#50545a"/>
<rect x="20" y="756" width="3" height="1" fill="#50545a"/>
<rect x="18.5" y="765" width="6" height="1" fill="#50545a"/>
<rect x="20" y="775" width="3" height="1" fill="#50545a"/>
<rect x="20" y="794" width="3" height="1" fill="#50545a"/>
<rect x="18.5" y="803" width="6" height="1" fill="#50545a"/>
<text transform="translate(23.3,215.3) rotate(-90)" x="0" y="0" font-family="Liberation Sans" font-size="9" fill="#4a4e54" text-anchor="middle">2</text>
<text transform="translate(23.3,253.1) rotate(-90)" x="0" y="0" font-family="Liberation Sans" font-size="9" fill="#4a4e54" text-anchor="middle">1</text>
<text transform="translate(23.3,290.9) rotate(-90)" x="0" y="0" font-family="Liberation Sans" font-size="9" fill="#4a4e54" text-anchor="middle">0</text>
<text transform="translate(23.3,328.7) rotate(-90)" x="0" y="0" font-family="Liberation Sans" font-size="9" fill="#4a4e54" text-anchor="middle">1</text>
<text transform="translate(23.3,366.5) rotate(-90)" x="0" y="0" font-family="Liberation Sans" font-size="9" fill="#4a4e54" text-anchor="middle">2</text>
<text transform="translate(23.3,404.3) rotate(-90)" x="0" y="0" font-family="Liberation Sans" font-size="9" fill="#4a4e54" text-anchor="middle">3</text>
<text transform="translate(23.3,442.1) rotate(-90)" x="0" y="0" font-family="Liberation Sans" font-size="9" fill="#4a4e54" text-anchor="middle">4</text>
<text transform="translate(23.3,479.9) rotate(-90)" x="0" y="0" font-family="Liberation Sans" font-size="9" fill="#4a4e54" text-anchor="middle">5</text>
<text transform="translate(23.3,517.7) rotate(-90)" x="0" y="0" font-family="Liberation Sans" font-size="9" fill="#4a4e54" text-anchor="middle">6</text>
<text transform="translate(23.3,555.5) rotate(-90)" x="0" y="0" font-family="Liberation Sans" font-size="9" fill="#4a4e54" text-anchor="middle">7</text>
<text transform="translate(23.3,593.3) rotate(-90)" x="0" y="0" font-family="Liberation Sans" font-size="9" fill="#4a4e54" text-anchor="middle">8</text>
<text transform="translate(23.3,631.1) rotate(-90)" x="0" y="0" font-family="Liberation Sans" font-size="9" fill="#4a4e54" text-anchor="middle">9</text>
<text transform="translate(23.3,668.9) rotate(-90)" x="0" y="0" font-family="Liberation Sans" font-size="9" fill="#4a4e54" text-anchor="middle">10</text>
<text transform="translate(23.3,706.7) rotate(-90)" x="0" y="0" font-family="Liberation Sans" font-size="9" fill="#4a4e54" text-anchor="middle">11</text>
<text transform="translate(23.3,744.5) rotate(-90)" x="0" y="0" font-family="Liberation Sans" font-size="9" fill="#4a4e54" text-anchor="middle">12</text>
<text transform="translate(23.3,782.3) rotate(-90)" x="0" y="0" font-family="Liberation Sans" font-size="9" fill="#4a4e54" text-anchor="middle">13</text>
<path d="M743,155.8 h9 l-4.5,-4.8 Z" fill="#4d5156"/>
<rect x="1036" y="155.2" width="8" height="5" fill="none" stroke="#5d6168" stroke-width="2"/><rect x="1035" y="154.2" width="10" height="2" fill="#5d6168"/>
<rect x="1056.5" y="154.7" width="4" height="4.5" fill="none" stroke="#5d6168" stroke-width="1.2"/><rect x="1055" y="158.7" width="7" height="1.3" fill="#5d6168"/><rect x="1058" y="159.7" width="1.2" height="3" fill="#5d6168"/>
<path d="M1073.5,154.5 L1081.5,161.0 M1081.5,154.5 L1073.5,161.0" stroke="#5d6168" stroke-width="2.2"/>
<rect x="1036" y="546" width="8" height="5" fill="none" stroke="#5d6168" stroke-width="2"/><rect x="1035" y="545" width="10" height="2" fill="#5d6168"/>
<rect x="1056.5" y="545.5" width="4" height="4.5" fill="none" stroke="#5d6168" stroke-width="1.2"/><rect x="1055" y="549.5" width="7" height="1.3" fill="#5d6168"/><rect x="1058" y="550.5" width="1.2" height="3" fill="#5d6168"/>
<path d="M1073.5,545.3 L1081.5,551.8 M1081.5,545.3 L1073.5,551.8" stroke="#5d6168" stroke-width="2.2"/>
<path d="M1073,181 h9 l-4.5,-5 Z" fill="#505459"/>
<path d="M1073,517.5 h9 l-4.5,5 Z" fill="#505459"/>
<rect x="1074" y="331" width="7" height="1" fill="#646464"/>
<rect x="1074" y="333" width="7" height="1" fill="#646464"/>
<rect x="1074" y="335" width="7" height="1" fill="#646464"/>
<rect x="1074" y="337" width="7" height="1" fill="#646464"/>
<rect x="744" y="386" width="7" height="1" fill="#646464"/>
<rect x="744" y="388" width="7" height="1" fill="#646464"/>
<rect x="744" y="390" width="7" height="1" fill="#646464"/>
<rect x="744" y="392" width="7" height="1" fill="#646464"/>
<path d="M767.5,178.5 l3.5,3.5 l3.5,-3.5" fill="none" stroke="#6d7176" stroke-width="1.6"/>
<rect x="781.6" y="173.6" width="14.8" height="10.8" rx="1" fill="#fff" stroke="#63676d" stroke-width="1.1"/>
<path d="M786,176.8 a3,1.8 0 0 1 6,0 v4.5 a3,1.8 0 0 1 -6,0 Z" fill="#f7870f"/>
<ellipse cx="789" cy="177" rx="1.7" ry="0.9" fill="#fff"/>
<path d="M785,196.5 l3.5,3.5 l3.5,-3.5" fill="none" stroke="#6d7176" stroke-width="1.6"/>
<rect x="799.5" y="190.5" width="15" height="12" rx="1" fill="#fff" stroke="#63676d"/>
<rect x="799.5" y="190.5" width="15" height="3" rx="1" fill="#c0e2c2" stroke="#3daa47"/>
<line x1="800" y1="196.5" x2="814" y2="196.5" stroke="#a2a6ab"/>
<line x1="800" y1="199.5" x2="814" y2="199.5" stroke="#a2a6ab"/>
<line x1="803.5" y1="194" x2="803.5" y2="202" stroke="#a2a6ab"/>
<line x1="810.5" y1="194" x2="810.5" y2="202" stroke="#a2a6ab"/>
<path d="M804,213.5 l3.5,3.2 l-3.5,3.2" fill="none" stroke="#6d7176" stroke-width="1.6"/>
<rect x="817.5" y="208.5" width="15" height="12" rx="1" fill="#fff" stroke="#63676d"/>
<rect x="817.5" y="208.5" width="15" height="3" rx="1" fill="#c0e2c2" stroke="#3daa47"/>
<line x1="818" y1="214.5" x2="832" y2="214.5" stroke="#a2a6ab"/>
<line x1="818" y1="217.5" x2="832" y2="217.5" stroke="#a2a6ab"/>
<line x1="821.5" y1="212" x2="821.5" y2="220" stroke="#a2a6ab"/>
<line x1="828.5" y1="212" x2="828.5" y2="220" stroke="#a2a6ab"/>
<path d="M804,231.5 l3.5,3.2 l-3.5,3.2" fill="none" stroke="#6d7176" stroke-width="1.6"/>
<rect x="817.5" y="226.5" width="15" height="12" rx="1" fill="#fff" stroke="#63676d"/>
<rect x="817.5" y="226.5" width="15" height="3" rx="1" fill="#c0e2c2" stroke="#3daa47"/>
<line x1="818" y1="232.5" x2="832" y2="232.5" stroke="#a2a6ab"/>
<line x1="818" y1="235.5" x2="832" y2="235.5" stroke="#a2a6ab"/>
<line x1="821.5" y1="230" x2="821.5" y2="238" stroke="#a2a6ab"/>
<line x1="828.5" y1="230" x2="828.5" y2="238" stroke="#a2a6ab"/>
<rect x="817.5" y="244.5" width="15" height="13" rx="1" fill="#fff" stroke="#63676d"/>
<rect x="817.5" y="244.5" width="15" height="3" rx="1" fill="#c0e2c2" stroke="#3daa47"/>
<text x="825" y="256" font-family="Liberation Sans" font-size="9.5" fill="#5d6168" text-anchor="middle">ab</text>
<rect x="817.5" y="262.5" width="15" height="13" rx="1" fill="#fff" stroke="#63676d"/>
<rect x="817.5" y="262.5" width="15" height="3" rx="1" fill="#c0e2c2" stroke="#3daa47"/>
<text x="825" y="274" font-family="Liberation Sans" font-size="9.5" fill="#5d6168" text-anchor="middle">ab</text>
<rect x="817.5" y="280.5" width="15" height="13" rx="1" fill="#fff" stroke="#63676d"/>
<rect x="817.5" y="280.5" width="15" height="3" rx="1" fill="#c0e2c2" stroke="#3daa47"/>
<text x="825" y="292" font-family="Liberation Sans" font-size="9.5" fill="#5d6168" text-anchor="middle">ab</text>
<rect x="817.5" y="298.5" width="15" height="13" rx="1" fill="#fff" stroke="#63676d"/>
<rect x="817.5" y="298.5" width="15" height="3" rx="1" fill="#c0e2c2" stroke="#3daa47"/>
<text x="825" y="310" font-family="Liberation Sans" font-size="9.5" fill="#5d6168" text-anchor="middle">ab</text>
<rect x="817.5" y="316.5" width="15" height="13" rx="1" fill="#fff" stroke="#63676d"/>
<rect x="817.5" y="316.5" width="15" height="3" rx="1" fill="#c0e2c2" stroke="#3daa47"/>
<text x="825" y="328" font-family="Liberation Sans" font-size="9.5" fill="#5d6168" text-anchor="middle">ab</text>
<rect x="817.5" y="334.5" width="15" height="13" rx="1" fill="#fff" stroke="#63676d"/>
<rect x="817.5" y="334.5" width="15" height="3" rx="1" fill="#c0e2c2" stroke="#3daa47"/>
<text x="825" y="346" font-family="Liberation Sans" font-size="9.5" fill="#5d6168" text-anchor="middle">ab</text>
<rect x="817.5" y="352.5" width="15" height="13" rx="1" fill="#fff" stroke="#63676d"/>
<rect x="817.5" y="352.5" width="15" height="3" rx="1" fill="#c0e2c2" stroke="#3daa47"/>
<text x="825" y="364" font-family="Liberation Sans" font-size="9.5" fill="#5d6168" text-anchor="middle">ab</text>
<rect x="817.5" y="370.5" width="15" height="13" rx="1" fill="#fff" stroke="#63676d"/>
<rect x="817.5" y="370.5" width="15" height="3" rx="1" fill="#c0e2c2" stroke="#3daa47"/>
<text x="825" y="382" font-family="Liberation Sans" font-size="9.5" fill="#5d6168" text-anchor="middle">ab</text>
<rect x="817.5" y="388.5" width="15" height="13" rx="1" fill="#fff" stroke="#63676d"/>
<rect x="817.5" y="388.5" width="15" height="3" rx="1" fill="#c0e2c2" stroke="#3daa47"/>
<text x="825" y="400" font-family="Liberation Sans" font-size="9.5" fill="#5d6168" text-anchor="middle">ab</text>
<rect x="817.5" y="406.5" width="15" height="13" rx="1" fill="#fff" stroke="#63676d"/>
<rect x="817.5" y="406.5" width="15" height="3" rx="1" fill="#c0e2c2" stroke="#3daa47"/>
<text x="825" y="417.8" font-family="Liberation Sans" font-size="6.5" font-weight="700" fill="#5d6168" text-anchor="middle">123</text>
<rect x="817.5" y="424.5" width="15" height="13" rx="1" fill="#fff" stroke="#63676d"/>
<rect x="817.5" y="424.5" width="15" height="3" rx="1" fill="#c0e2c2" stroke="#3daa47"/>
<text x="825" y="435.8" font-family="Liberation Sans" font-size="6.5" font-weight="700" fill="#5d6168" text-anchor="middle">101</text>
<rect x="817.5" y="442.5" width="15" height="13" rx="1" fill="#fff" stroke="#63676d"/>
<rect x="817.5" y="442.5" width="15" height="3" rx="1" fill="#c0e2c2" stroke="#3daa47"/>
<text x="825" y="454" font-family="Liberation Sans" font-size="9.5" fill="#5d6168" text-anchor="middle">ab</text>
<rect x="817.5" y="460.5" width="15" height="13" rx="1" fill="#fff" stroke="#63676d"/>
<rect x="817.5" y="460.5" width="15" height="3" rx="1" fill="#c0e2c2" stroke="#3daa47"/>
<text x="825" y="472" font-family="Liberation Sans" font-size="9.5" fill="#5d6168" text-anchor="middle">ab</text>
<rect x="817.5" y="478.5" width="15" height="13" rx="1" fill="#fff" stroke="#63676d"/>
<rect x="817.5" y="478.5" width="15" height="3" rx="1" fill="#c0e2c2" stroke="#3daa47"/>
<text x="825" y="490" font-family="Liberation Sans" font-size="9.5" fill="#5d6168" text-anchor="middle">ab</text>
<rect x="817.5" y="496.5" width="15" height="13" rx="1" fill="#fff" stroke="#63676d"/>
<rect x="817.5" y="496.5" width="15" height="3" rx="1" fill="#c0e2c2" stroke="#3daa47"/>
<text x="825" y="508" font-family="Liberation Sans" font-size="9.5" fill="#5d6168" text-anchor="middle">ab</text>
<path d="M786,518.5 l3.5,3.2 l-3.5,3.2" fill="none" stroke="#6d7176" stroke-width="1.6"/>
<rect x="799.5" y="514.5" width="15" height="12" rx="1" fill="#fff" stroke="#63676d"/>
<rect x="799.5" y="514.5" width="15" height="3" rx="1" fill="#fcd3b0" stroke="#f28c3c"/>
<line x1="800" y1="520.5" x2="814" y2="520.5" stroke="#a2a6ab"/>
<line x1="800" y1="523.5" x2="814" y2="523.5" stroke="#a2a6ab"/>
<line x1="803.5" y1="518" x2="803.5" y2="526" stroke="#a2a6ab"/>
<line x1="810.5" y1="518" x2="810.5" y2="526" stroke="#a2a6ab"/>
<rect x="781.5" y="565.5" width="11" height="4.2" rx="1.2" fill="#cde6f8" stroke="#5b8fd0"/>
<rect x="784.7" y="571.5" width="11" height="4.2" rx="1.2" fill="#cde6f8" stroke="#5b8fd0"/>
<rect x="781.5" y="583.5" width="11" height="4.2" rx="1.2" fill="#cde6f8" stroke="#5b8fd0"/>
<rect x="784.7" y="589.5" width="11" height="4.2" rx="1.2" fill="#cde6f8" stroke="#5b8fd0"/>
<rect x="781.5" y="601.5" width="11" height="4.2" rx="1.2" fill="#cde6f8" stroke="#5b8fd0"/>
<rect x="784.7" y="607.5" width="11" height="4.2" rx="1.2" fill="#cde6f8" stroke="#5b8fd0"/>
<rect x="781.5" y="619.5" width="11" height="4.2" rx="1.2" fill="#cde6f8" stroke="#5b8fd0"/>
<rect x="784.7" y="625.5" width="11" height="4.2" rx="1.2" fill="#cde6f8" stroke="#5b8fd0"/>
</svg>
<div class=t style='left:240.4px;top:8.6px;font-size:12px;color:#5a79b0;font-weight:400;transform:scaleX(0.886);'>Editor plantilla</div>
<div class=t style='left:518.4px;top:8.8px;font-size:12px;color:#3d4a5e;font-weight:700;transform:scaleX(1.007);'>Herramientas de Tablas</div>
<div class=t style='left:706.9px;top:8.8px;font-size:12px;color:#3d4a5e;font-weight:700;transform:scaleX(1.004);'>Herramientas de datos</div>
<div class=t style='left:20.9px;top:36.0px;font-size:11px;color:#333a4a;font-weight:400;transform:scaleX(0.976);'>Fichero</div>
<div class=t style='left:82.1px;top:36.0px;font-size:11px;color:#333a4a;font-weight:400;transform:scaleX(0.977);'>Inicio</div>
<div class=t style='left:133.0px;top:36.0px;font-size:11px;color:#333a4a;font-weight:400;transform:scaleX(1.051);'>Insertar</div>
<div class=t style='left:197.9px;top:36.0px;font-size:11px;color:#333a4a;font-weight:400;transform:scaleX(0.957);'>Distribución de Página</div>
<div class=t style='left:328.9px;top:36.0px;font-size:11px;color:#333a4a;font-weight:400;transform:scaleX(0.940);'>Vista</div>
<div class=t style='left:377.4px;top:36.0px;font-size:11px;color:#333a4a;font-weight:400;transform:scaleX(0.973);'>Revisar</div>
<div class=t style='left:439.4px;top:36.0px;font-size:11px;color:#333a4a;font-weight:400;transform:scaleX(0.993);'>Referencias</div>
<div class=t style='left:525.9px;top:36.0px;font-size:11px;color:#333a4a;font-weight:400;transform:scaleX(0.943);'>Diseño</div>
<div class=t style='left:584.0px;top:36.0px;font-size:11px;color:#333a4a;font-weight:400;transform:scaleX(0.940);'>Diseño</div>
<div class=t style='left:678.2px;top:36.0px;font-size:11px;color:#333a4a;font-weight:400;transform:scaleX(0.962);'>Apariencia</div>
<div class=t style='left:753.8px;top:36.0px;font-size:11px;color:#333a4a;font-weight:400;transform:scaleX(0.995);'>Intercalación de correo</div>
<div class=t style='left:18.7px;top:94.1px;font-size:12px;color:#333;font-weight:400;transform:scaleX(0.877);'>Pegar</div>
<div class=t style='left:80.7px;top:60.4px;font-size:12px;color:#a0a0a0;font-weight:400;transform:scaleX(0.939);'>Cortar</div>
<div class=t style='left:80.7px;top:82.1px;font-size:12px;color:#a0a0a0;font-weight:400;transform:scaleX(0.891);'>Copiar</div>
<div class=t style='left:80.7px;top:104.1px;font-size:12px;color:#333;font-weight:400;transform:scaleX(0.864);'>Pegado Especial</div>
<div class=t style='left:57.0px;top:125.1px;font-size:12px;color:#5c6b8a;font-weight:400;transform:scaleX(0.898);'>Portapapeles</div>
<div class=t style='left:186.8px;top:67.6px;font-size:11px;color:#000;font-weight:400;transform:scaleX(0.943);'>Calibri</div>
<div class=t style='left:318.9px;top:67.6px;font-size:11px;color:#000;font-weight:400;transform:scaleX(0.989);'>11</div>
<div class=t style='left:306.0px;top:125.1px;font-size:12px;color:#5c6b8a;font-weight:400;transform:scaleX(0.923);'>Fuente</div>
<div class=t style='left:563.8px;top:125.1px;font-size:12px;color:#5c6b8a;font-weight:400;transform:scaleX(0.925);'>Párrafo</div>
<div class=t style='left:755.7px;top:125.1px;font-size:12px;color:#5c6b8a;font-weight:400;transform:scaleX(0.888);'>Estilos</div>
<div class=t style='left:907.3px;top:125.1px;font-size:12px;color:#5c6b8a;font-weight:400;transform:scaleX(0.854);'>Edición</div>
<div class=t style='left:904.6px;top:67.7px;font-size:12px;color:#333;font-weight:400;transform:scaleX(0.889);'>Buscar</div>
<div class=t style='left:904.6px;top:97.1px;font-size:12px;color:#333;font-weight:400;transform:scaleX(0.879);'>Reemplazar</div>
<div class=t style='left:701.4px;top:76.3px;font-size:11px;color:#000;font-weight:400;transform:scaleX(1.021);'>AaBbCcDdEe</div>
<div class=t style='left:710.2px;top:100.1px;font-size:12px;color:#000;font-weight:400;transform:scaleX(1.054);'>¶</div>
<div class=t style='left:719.7px;top:100.1px;font-size:12px;color:#000;font-weight:400;transform:scaleX(1.063);'>Normal</div>
<div class=t style='left:776.7px;top:76.3px;font-size:11px;color:#3030e0;font-weight:400;transform:scaleX(1.014);'>AaBbCcDdEe</div>
<div class=t style='left:783.2px;top:100.1px;font-size:12px;color:#000;font-weight:400;transform:scaleX(1.069);'>Insertar...</div>
<div class=t style='left:188.9px;top:96.3px;font-size:14px;color:#62666d;font-weight:700;transform:scaleX(0.978);'>B</div>
<div class=t style='left:234.7px;top:96.7px;font-size:13px;color:#62666d;font-weight:400;transform:scaleX(1.097);'>U</div>
<div class=t style='left:257.3px;top:96.7px;font-size:13px;color:#62666d;font-weight:400;transform:scaleX(1.161);'>U</div>
<div class=t style='left:279.8px;top:96.3px;font-size:14px;color:#62666d;font-weight:400;transform:scaleX(1.102);'>S</div>
<div class=t style='left:303.1px;top:96.3px;font-size:14px;color:#62666d;font-weight:400;transform:scaleX(1.102);'>S</div>
<div class=t style='left:324.8px;top:97.2px;font-size:14px;color:#62666d;font-weight:700;transform:scaleX(1.167);'>X</div>
<div class=t style='left:335.9px;top:96.0px;font-size:7px;color:#e0334a;font-weight:700;transform:scaleX(1.229);'>2</div>
<div class=t style='left:347.3px;top:97.2px;font-size:14px;color:#62666d;font-weight:700;transform:scaleX(1.220);'>X</div>
<div class=t style='left:358.2px;top:106.0px;font-size:7px;color:#e0334a;font-weight:700;transform:scaleX(1.229);'>2</div>
<div class=t style='left:369.7px;top:66.8px;font-size:15px;color:#62666d;font-weight:400;transform:scaleX(1.048);'>A</div>
<div class=t style='left:394.4px;top:70.9px;font-size:10.5px;color:#62666d;font-weight:400;transform:scaleX(1.112);'>A</div>
<div class=t style='left:456.4px;top:67.6px;font-size:11.5px;color:#3b78d8;font-weight:700;transform:scaleX(1.007);'>Aa</div>
<div class=t style='left:377.4px;top:96.1px;font-size:12px;color:#62666d;font-weight:400;transform:scaleX(1.173);'>A</div>
<div class=t style='left:410.7px;top:94.5px;font-size:8.5px;color:#62666d;font-weight:700;transform:scaleX(0.957);'>ab</div>
<div class=t style='left:455.6px;top:94.4px;font-size:9px;color:#62666d;font-weight:700;transform:scaleX(1.103);'>ab</div>
<div class=t style='left:763.9px;top:151.1px;font-size:12px;color:#5c6b8a;font-weight:400;transform:scaleX(0.870);'>Lista de Campos</div>
<div class=t style='left:764.0px;top:541.8px;font-size:12px;color:#2e3440;font-weight:400;transform:scaleX(0.900);'>Explorador de informes</div>
<div class=t style='left:800.8px;top:172.6px;font-size:11px;color:#000;font-weight:400;transform:scaleX(0.965);'>PlantillaImpresionFacturaArrendadorEL</div>
<div class=t style='left:819.1px;top:190.6px;font-size:11px;color:#000;font-weight:400;transform:scaleX(0.917);'>FACTURA</div>
<div class=t style='left:836.7px;top:208.6px;font-size:11px;color:#000;font-weight:400;transform:scaleX(0.912);'>FK_FACTURA_FACTURA_IMPORTES</div>
<div class=t style='left:836.7px;top:226.6px;font-size:11px;color:#000;font-weight:400;transform:scaleX(0.918);'>FK_FACTURA_FACTURA_LINEA</div>
<div class=t style='left:836.7px;top:244.6px;font-size:11px;color:#000;font-weight:400;transform:scaleX(0.913);'>CODIGO_CLIENTE</div>
<div class=t style='left:836.7px;top:262.6px;font-size:11px;color:#000;font-weight:400;transform:scaleX(0.926);'>CODIGO_FACTURA</div>
<div class=t style='left:836.7px;top:280.6px;font-size:11px;color:#000;font-weight:400;transform:scaleX(0.924);'>DIRECCION_FISCAL</div>
<div class=t style='left:836.7px;top:298.6px;font-size:11px;color:#000;font-weight:400;transform:scaleX(0.913);'>DIRECCION_INMUEBLE_ALQUILADO</div>
<div class=t style='left:836.7px;top:316.6px;font-size:11px;color:#000;font-weight:400;transform:scaleX(0.926);'>EMISOR_DIRECCION</div>
<div class=t style='left:836.7px;top:334.6px;font-size:11px;color:#000;font-weight:400;transform:scaleX(0.933);'>EMISOR_NIF</div>
<div class=t style='left:836.7px;top:352.6px;font-size:11px;color:#000;font-weight:400;transform:scaleX(0.895);'>EMISOR_NOMBRE</div>
<div class=t style='left:836.7px;top:370.6px;font-size:11px;color:#000;font-weight:400;transform:scaleX(0.917);'>FECHA_EMISION</div>
<div class=t style='left:836.7px;top:388.6px;font-size:11px;color:#000;font-weight:400;transform:scaleX(0.912);'>FORMA_COBRO</div>
<div class=t style='left:836.7px;top:406.6px;font-size:11px;color:#000;font-weight:400;transform:scaleX(0.939);'>ID_FACTURA</div>
<div class=t style='left:836.7px;top:424.6px;font-size:11px;color:#000;font-weight:400;transform:scaleX(0.906);'>LOGO_FACTURA_ARRENDADOR</div>
<div class=t style='left:836.7px;top:442.6px;font-size:11px;color:#000;font-weight:400;transform:scaleX(0.992);'>NIF</div>
<div class=t style='left:836.7px;top:460.6px;font-size:11px;color:#000;font-weight:400;transform:scaleX(0.884);'>NOMBRE</div>
<div class=t style='left:836.7px;top:478.6px;font-size:11px;color:#000;font-weight:400;transform:scaleX(0.905);'>REFERENCIA_CATASTRAL</div>
<div class=t style='left:836.7px;top:496.6px;font-size:11px;color:#000;font-weight:400;transform:scaleX(0.911);'>TIPO_DOCUMENTO</div>
<div class=t style='left:818.9px;top:514.6px;font-size:11px;color:#000;font-weight:400;transform:scaleX(0.909);'>FACTURA_IMPORTES</div>
<div class=t style='left:800.7px;top:563.8px;font-size:11px;color:#000;font-weight:400;transform:scaleX(0.943);'>Lista - FACTURA_LINEA1</div>
<div class=t style='left:800.7px;top:581.8px;font-size:11px;color:#000;font-weight:400;transform:scaleX(0.943);'>Lista - FACTURA_LINEA2</div>
<div class=t style='left:800.7px;top:599.8px;font-size:11px;color:#000;font-weight:400;transform:scaleX(0.929);'>Lista - FACTURA_IMPORTES1</div>
<div class=t style='left:800.7px;top:617.8px;font-size:11px;color:#000;font-weight:400;transform:scaleX(0.929);'>Lista - FACTURA_IMPORTES2</div>
<div class=t style='left:58.9px;top:336.4px;font-size:13px;color:#868686;font-weight:400;transform:scaleX(1.028);'>Pepe García Jiménez</div>
<div class=t style='left:58.9px;top:352.2px;font-size:13px;color:#868686;font-weight:400;transform:scaleX(1.032);'>Florida 70, Escalera A, Ático 1ª</div>
<div class=t style='left:58.9px;top:367.2px;font-size:13px;color:#868686;font-weight:400;transform:scaleX(1.023);'>08905 L&#x27;Hospitalet de Llobregat (BARCELONA)</div>
<div class=t style='left:58.9px;top:382.0px;font-size:13px;color:#868686;font-weight:400;transform:scaleX(1.011);'>NIF: 12131415J</div>
<div class=t style='left:58.7px;top:414.2px;font-size:13px;color:#000;font-weight:700;transform:scaleX(0.969);'>Factura</div>
<div class=t style='left:58.7px;top:432.2px;font-size:13px;color:#000;font-weight:700;transform:scaleX(0.934);'>Fecha</div>
<div class=t style='left:58.7px;top:450.2px;font-size:13px;color:#000;font-weight:700;transform:scaleX(0.985);'>Cliente</div>
<div class=t style='left:58.7px;top:468.2px;font-size:13px;color:#000;font-weight:700;transform:scaleX(1.000);'>CIF/NIF</div>
<div class=t style='left:147.7px;top:414.2px;font-size:13px;color:#000;font-weight:400;transform:scaleX(1.026);'>2015000001</div>
<div class=t style='left:147.7px;top:432.2px;font-size:13px;color:#000;font-weight:400;transform:scaleX(1.097);'>31/10/2019</div>
<div class=t style='left:147.7px;top:450.2px;font-size:13px;color:#000;font-weight:400;transform:scaleX(1.028);'>010</div>
<div class=t style='left:147.7px;top:468.2px;font-size:13px;color:#000;font-weight:400;transform:scaleX(1.010);'>B12345678</div>
<div class=t style='left:436.8px;top:414.2px;font-size:13px;color:#000;font-weight:400;transform:scaleX(1.006);'>Pragma Informática SL</div>
<div class=t style='left:436.8px;top:432.2px;font-size:13px;color:#000;font-weight:400;transform:scaleX(1.029);'>Bailén 20, 3º - 1ª</div>
<div class=t style='left:436.8px;top:450.2px;font-size:13px;color:#000;font-weight:400;transform:scaleX(1.018);'>08010 Barcelona</div>
<div class=t style='left:58.7px;top:504.2px;font-size:13px;color:#000;font-weight:400;transform:scaleX(1.052);'>Alquiler correspondiente al departamento sito en:</div>
<div class=t style='left:360.4px;top:504.2px;font-size:13px;color:#000;font-weight:400;transform:scaleX(1.032);'>Bailén 20, 3º - 1ª</div>
<div class=t style='left:58.7px;top:522.2px;font-size:13px;color:#000;font-weight:400;transform:scaleX(0.995);'>Referencia Catastral:</div>
<div class=t style='left:184.7px;top:522.2px;font-size:13px;color:#000;font-weight:400;transform:scaleX(1.028);'>60594038475859594</div>
<div class=t style='left:58.9px;top:557.6px;font-size:13px;color:#000;font-weight:700;transform:scaleX(0.972);'>Concepto</div>
<div class=t style='left:641.4px;top:557.6px;font-size:13px;color:#000;font-weight:700;transform:scaleX(1.061);'>Importe</div>
<div class=t style='left:65.8px;top:574.9px;font-size:13px;color:#000;font-weight:400;transform:scaleX(0.983);'>Renta</div>
<div class=t style='left:65.8px;top:592.9px;font-size:13px;color:#000;font-weight:400;transform:scaleX(1.011);'>Incrementos de IPC</div>
<div class=t style='left:65.8px;top:610.9px;font-size:13px;color:#000;font-weight:400;transform:scaleX(0.987);'>IBI</div>
<div class=t style='left:647.6px;top:574.7px;font-size:13px;color:#000;font-weight:400;transform:scaleX(1.057);'>1.000,00</div>
<div class=t style='left:659.6px;top:592.7px;font-size:13px;color:#000;font-weight:400;transform:scaleX(1.044);'>400,00</div>
<div class=t style='left:659.6px;top:610.5px;font-size:13px;color:#000;font-weight:400;transform:scaleX(1.044);'>200,00</div>
<div class=t style='left:284.9px;top:683.8px;font-size:13px;color:#000;font-weight:400;transform:scaleX(1.059);'>Total Bruto</div>
<div class=t style='left:284.9px;top:701.6px;font-size:13px;color:#000;font-weight:400;transform:scaleX(1.014);'>21% de IVA General sobre 1.600,00</div>
<div class=t style='left:284.9px;top:719.6px;font-size:13px;color:#000;font-weight:400;transform:scaleX(0.986);'>18% de I.R.P.F sobre 1.600,00</div>
<div class=t style='left:284.9px;top:737.6px;font-size:13px;color:#000;font-weight:400;transform:scaleX(1.014);'>Total Factura</div>
<div class=t style='left:647.6px;top:683.8px;font-size:13px;color:#000;font-weight:400;transform:scaleX(1.057);'>1.600,00</div>
<div class=t style='left:659.6px;top:701.6px;font-size:13px;color:#000;font-weight:400;transform:scaleX(1.044);'>336,00</div>
<div class=t style='left:654.9px;top:719.6px;font-size:13px;color:#000;font-weight:400;transform:scaleX(1.048);'>-288,00</div>
<div class=t style='left:647.6px;top:737.6px;font-size:13px;color:#000;font-weight:400;transform:scaleX(1.057);'>1.648,00</div>
<div class=t style='left:58.9px;top:793.8px;font-size:12px;color:#000;font-weight:700;transform:scaleX(0.959);'>Forma de pago</div>
<div class=t style='left:174.1px;top:794.1px;font-size:12px;color:#000;font-weight:400;transform:scaleX(1.023);'>Domiciliado en:</div>
<div class=t style='left:261.0px;top:794.4px;font-size:15px;color:#000;font-weight:400;transform:scaleX(1.088);'>**** **** **** **** ****</div>
<div class=t style='left:409.4px;top:794.1px;font-size:12px;color:#000;font-weight:400;transform:scaleX(0.917);'>2227 ( BARCLAYS BANK, S.A. - BARCESMMXXX  )</div>
<!-- red boxes + arrows -->
<div class=a style="left:358px;top:502px;width:108px;height:19px;border:2px solid #f00"></div>
<div class=a style="left:182px;top:520px;width:133px;height:18px;border:2px solid #f00"></div>
<div class=a style="left:813px;top:295px;width:201px;height:19px;border:2px solid #f00"></div>
<div class=a style="left:812px;top:475px;width:153px;height:20px;border:2px solid #f00"></div>
<svg class=a style="left:0;top:0" width="1099" height="811">
<polyline points="138.5,348.5 140.5,350.5 142.5,348.5 144.5,350.5 146.5,348.5 148.5,350.5 150.5,348.5 152.5,350.5 154.5,348.5 156.5,350.5 158.5,348.5 160.5,350.5 162.5,348.5 164.5,350.5 166.5,348.5 168.5,350.5 170.5,348.5 172.5,350.5 174.5,348.5 176.5,350.5 178.5,348.5 180.5,350.5 182.5,348.5 184.5,350.5 186.5,348.5" fill="none" stroke="#f00" stroke-width="0.9"/>
<polyline points="191.5,378.8 193.5,380.8 195.5,378.8 197.5,380.8 199.5,378.8 201.5,380.8 203.5,378.8 205.5,380.8 207.5,378.8 209.5,380.8 211.5,378.8 213.5,380.8 215.5,378.8 217.5,380.8 219.5,378.8 221.5,380.8 223.5,378.8 225.5,380.8 227.5,378.8 229.5,380.8 231.5,378.8 233.5,380.8 235.5,378.8 237.5,380.8 239.5,378.8 241.5,380.8 243.5,378.8 245.5,380.8" fill="none" stroke="#f00" stroke-width="0.9"/>
<polyline points="438.0,427.6 440.0,429.6 442.0,427.6 444.0,429.6 446.0,427.6 448.0,429.6 450.0,427.6 452.0,429.6 454.0,427.6 456.0,429.6 458.0,427.6 460.0,429.6 462.0,427.6 464.0,429.6 466.0,427.6 468.0,429.6 470.0,427.6 472.0,429.6 474.0,427.6 476.0,429.6 478.0,427.6 480.0,429.6 482.0,427.6" fill="none" stroke="#f00" stroke-width="0.9"/>
<polyline points="438.0,445.6 440.0,447.6 442.0,445.6 444.0,447.6 446.0,445.6 448.0,447.6 450.0,445.6 452.0,447.6 454.0,445.6 456.0,447.6 458.0,445.6 460.0,447.6 462.0,445.6 464.0,447.6 466.0,445.6 468.0,447.6 470.0,445.6 472.0,447.6 474.0,445.6" fill="none" stroke="#f00" stroke-width="0.9"/>
<polyline points="361.5,517.5 363.5,519.5 365.5,517.5 367.5,519.5 369.5,517.5 371.5,519.5 373.5,517.5 375.5,519.5 377.5,517.5 379.5,519.5 381.5,517.5 383.5,519.5 385.5,517.5 387.5,519.5 389.5,517.5 391.5,519.5 393.5,517.5 395.5,519.5 397.5,517.5" fill="none" stroke="#f00" stroke-width="0.9"/>
<line x1="813.4" y1="304.8" x2="477" y2="502.5" stroke="#f00" stroke-width="3"/>
<polygon points="466,509.5 475.5,497 481.5,506.5" fill="#f00"/>
<line x1="811" y1="486.4" x2="330" y2="532" stroke="#f00" stroke-width="3"/>
<polygon points="315.5,533.4 331.6,526.1 332.7,537.7" fill="#f00"/>
</svg>

</body></html>
